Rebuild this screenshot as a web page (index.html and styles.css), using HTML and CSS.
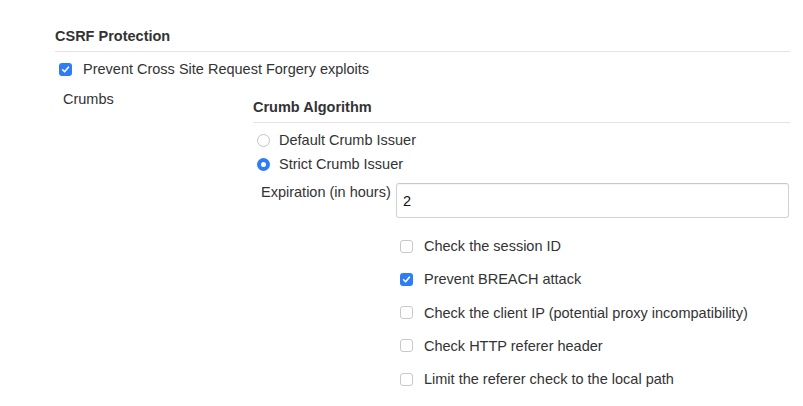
FILE: index.html
```html
<!DOCTYPE html>
<html>
<head>
<meta charset="utf-8">
<link rel="stylesheet" href="styles.css">
</head>
<body>
<div class="page">
  <section class="section">
    <h2 class="section-title">CSRF Protection</h2>
    <div class="check-row top-check">
      <span class="cb checked"><svg viewBox="0 0 13 13" width="13" height="13"><path d="M3.6 6.8 L5.6 8.8 L9.4 4.2" fill="none" stroke="#fff" stroke-width="1.6" stroke-linecap="round" stroke-linejoin="round"/></svg></span>
      <span class="label">Prevent Cross Site Request Forgery exploits</span>
    </div>
    <div class="crumbs">
      <div class="crumbs-label">Crumbs</div>
      <div class="crumbs-body">
        <h3 class="sub-title">Crumb Algorithm</h3>
        <div class="radio-row first"><span class="radio"></span><span class="label">Default Crumb Issuer</span></div>
        <div class="radio-row"><span class="radio on"></span><span class="label">Strict Crumb Issuer</span></div>
        <div class="field">
          <div class="field-label">Expiration (in hours)</div>
          <div class="input">2</div>
        </div>
        <div class="options">
          <div class="check-row"><span class="cb"></span><span class="label">Check the session ID</span></div>
          <div class="check-row"><span class="cb checked"><svg viewBox="0 0 13 13" width="13" height="13"><path d="M3.6 6.8 L5.6 8.8 L9.4 4.2" fill="none" stroke="#fff" stroke-width="1.6" stroke-linecap="round" stroke-linejoin="round"/></svg></span><span class="label">Prevent BREACH attack</span></div>
          <div class="check-row"><span class="cb"></span><span class="label">Check the client IP (potential proxy incompatibility)</span></div>
          <div class="check-row"><span class="cb"></span><span class="label">Check HTTP referer header</span></div>
          <div class="check-row"><span class="cb"></span><span class="label">Limit the referer check to the local path</span></div>
        </div>
      </div>
    </div>
  </section>
</div>
</body>
</html>
```
FILE: styles.css
```css
html, body {
  margin: 0;
  padding: 0;
  background: #fff;
}
body {
  font-family: "Liberation Sans", Arial, sans-serif;
  font-size: 14.5px;
  line-height: 16px;
  color: #333;
}
.page {
  width: 803px;
  height: 406px;
  overflow: hidden;
}
.section {
  margin-left: 55px;
  width: 735px;
}
.section-title {
  margin: 28px 0 0;
  font-size: 14.5px;
  line-height: 16px;
  font-weight: bold;
  color: #333;
  padding-bottom: 7px;
  border-bottom: 1px solid #e3e3e3;
}
.check-row {
  display: flex;
  align-items: center;
  height: 16px;
}
.top-check {
  margin-top: 9px;
  margin-left: 4px;
}
.cb {
  box-sizing: border-box;
  width: 13px;
  height: 13px;
  border: 1px solid #c9c9c9;
  border-radius: 3px;
  background: #fff;
  margin-right: 11px;
  flex: none;
  display: flex;
  align-items: center;
  justify-content: center;
}
.cb.checked {
  border: none;
  background: #2f7df6;
}
.cb svg {
  display: block;
}
.crumbs {
  display: flex;
  margin-top: 14px;
}
.crumbs-label {
  width: 190px;
  padding-left: 8px;
  flex: none;
}
.crumbs-body {
  flex: 1;
  padding-top: 8px;
}
.sub-title {
  margin: 0;
  font-size: 14.5px;
  line-height: 16px;
  font-weight: bold;
  color: #333;
  padding-bottom: 7px;
  border-bottom: 1px solid #e3e3e3;
}
.radio-row {
  display: flex;
  align-items: center;
  height: 16px;
  margin-top: 8px;
  margin-left: 4px;
}
.radio-row.first {
  margin-top: 9px;
}
.radio {
  box-sizing: border-box;
  width: 13px;
  height: 13px;
  border-radius: 50%;
  border: 1px solid #c4c4c4;
  background: #fff;
  margin-right: 9px;
  flex: none;
  display: flex;
  align-items: center;
  justify-content: center;
}
.radio.on {
  border: none;
  background: #2f7df6;
}
.radio.on::after {
  content: "";
  width: 5px;
  height: 5px;
  border-radius: 50%;
  background: #fff;
}
.field {
  display: flex;
  margin-top: 11px;
}
.field-label {
  width: 135px;
  padding-left: 8px;
  padding-top: 1px;
  flex: none;
}
.input {
  box-sizing: border-box;
  width: 393px;
  height: 35px;
  border: 1px solid #d2d2d2;
  border-top-color: #c8c8c8;
  border-radius: 3px;
  box-shadow: inset 0 1px 1px rgba(0, 0, 0, 0.04);
  padding: 0 6px;
  display: flex;
  align-items: center;
  color: #111;
}
.options {
  margin-top: 20px;
  margin-left: 147px;
  display: flex;
  flex-direction: column;
  gap: 17.3px;
}
```
